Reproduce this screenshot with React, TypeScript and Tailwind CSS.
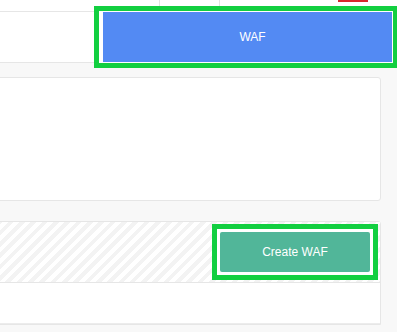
export default function App() {
  return (
    <div className="h-[332px] w-[397px] overflow-hidden bg-[#f8f8f8] font-['Liberation_Sans',Arial,sans-serif] text-[12px]">
      {/* top nav strip */}
      <div className="relative h-[12px] border-b border-[#e6e6e6] bg-white">
        <div className="absolute left-[159px] top-0 h-[11px] w-px bg-[#e3e3e3]" />
        <div className="absolute left-[219px] top-0 h-[11px] w-px bg-[#e3e3e3]" />
        <div className="absolute left-[338px] top-0 h-[2px] w-[30px] bg-[#d8262c]" />
      </div>

      {/* tab row */}
      <div className="flex h-[51px] border-b border-[#e6e6e6] bg-white">
        <div className="w-[94px] shrink-0" />
        <div className="relative z-10 -mt-[6px] -mb-[6px] w-[304px] shrink-0 border-[5px] border-[#12cf40] bg-white pt-px pb-px pl-[4px] pr-[1px]">
          <div className="flex h-[50px] w-[289px] items-center justify-center bg-[#538af3] pl-[10px] text-white">
            WAF
          </div>
        </div>
      </div>

      {/* content */}
      <div className="-ml-1 pr-[16px] pt-[14px]">
        <div className="h-[124px] rounded-[3px] border border-[#e6e6e6] bg-white" />

        <div className="mt-[20px] rounded-t-[3px] border border-[#e6e6e6] bg-white">
          <div className="flex justify-end border-b border-[#e6e6e6] bg-[repeating-linear-gradient(135deg,#f3f3f3_0px,#f3f3f3_4px,#ffffff_4px,#ffffff_8px)] pt-[10px] pr-[9px] pb-[10px]">
            <div className="border-[5px] border-[#12cf40] bg-white p-[3px] -m-[8px] mr-[-7px]">
              <button className="flex h-[40px] w-[150px] items-center justify-center rounded-[2px] bg-[#51b699] text-[12px] text-white">
                Create WAF
              </button>
            </div>
          </div>
          <div className="h-[41px] border-b border-[#ececec] bg-white" />
        </div>
      </div>
    </div>
  );
}
